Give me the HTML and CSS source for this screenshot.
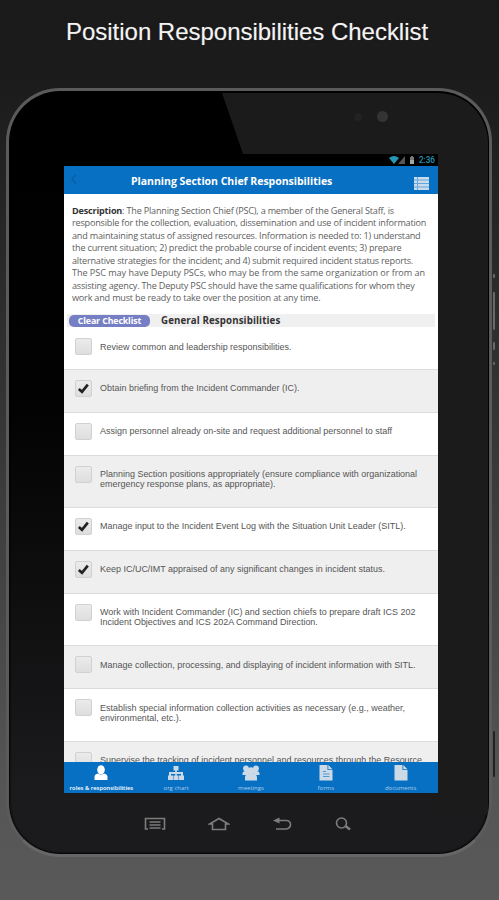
FILE: index.html
```html
<!DOCTYPE html>
<html lang="en">
<head>
<meta charset="utf-8">
<title>Position Responsibilities Checklist</title>
<link rel="stylesheet" href="styles.css">
</head>
<body>
<h1 class="title"><span>Position Responsibilities Checklist</span></h1>
<main class="device">
  <div class="glare"></div>
  <i class="sensor"></i><i class="camera"></i>
  <i class="side dot-a"></i><i class="side power"></i><i class="side dot-b"></i><i class="side dot-c"></i><i class="side dock"></i>
  <section class="screen">
    <div class="status">
      <svg width="29" height="10" viewBox="0 0 29 10"><path d="M0 3Q5 -1 10 3L5 9Z" fill="#2796b5"/><path d="M16 1V9H9Z" fill="#555"/><path d="M21 2h1V1h2v1h1v7h-4Z" fill="#777"/><path d="M21 5h4v4h-4z" fill="#9aa"/></svg>
      <span>2:36</span>
    </div>
    <header class="bar">
      <svg class="back" width="8" height="12" viewBox="0 0 8 12"><path d="M6 1.5 2 6l4 4.5" fill="none" stroke="#0a5fa8" stroke-width="1.5"/></svg>
      <h2>Planning Section Chief Responsibilities</h2>
      <svg class="menu" width="15" height="13" viewBox="0 0 15 13"><path d="M0 0h15v13H0z" fill="#68a5d8"/><path d="M0 0h3v2.5H0zM4 0h11v2.5H4zM0 3.5h3V6H0zM4 3.5h11V6H4zM0 7h3v2.5H0zM4 7h11v2.5H4zM0 10.5h3V13H0zM4 10.5h11V13H4z" fill="#c7dcec"/></svg>
    </header>
    <div class="content">
      <p class="desc"><b>Description</b>: The Planning Section Chief (PSC), a member of the General Staff, is<br>responsible for the collection, evaluation, dissemination and use of incident information<br>and maintaining status of assigned resources. Information is needed to: 1) understand<br>the current situation; 2) predict the probable course of incident events; 3) prepare<br>alternative strategies for the incident; and 4) submit required incident status reports.<br><span class="wide">The PSC may have Deputy PSCs, who may be from the same organization or from an</span><br>assisting agency. The Deputy PSC should have the same qualifications for whom they<br>work and must be ready to take over the position at any time.</p>
      <div class="section"><button>Clear Checklist</button><h3>General Responsibilities</h3></div>
      <ul class="list">
        <li class="first"><i class="box"></i><span>Review common and leadership responsibilities.</span></li>
        <li><i class="box"><svg viewBox="0 0 17 17"><path d="M3.8 8.9 7 11.8 12.8 4.7" /></svg></i><span>Obtain briefing from the Incident Commander (IC).</span></li>
        <li><i class="box"></i><span>Assign personnel already on-site and request additional personnel to staff</span></li>
        <li class="two"><i class="box"></i><span>Planning Section positions appropriately (ensure compliance with organizational<br>emergency response plans, as appropriate).</span></li>
        <li><i class="box"><svg viewBox="0 0 17 17"><path d="M3.8 8.9 7 11.8 12.8 4.7" /></svg></i><span>Manage input to the Incident Event Log with the Situation Unit Leader (SITL).</span></li>
        <li><i class="box"><svg viewBox="0 0 17 17"><path d="M3.8 8.9 7 11.8 12.8 4.7" /></svg></i><span>Keep IC/UC/IMT appraised of any significant changes in incident status.</span></li>
        <li class="two"><i class="box"></i><span>Work with Incident Commander (IC) and section chiefs to prepare draft ICS 202<br>Incident Objectives and ICS 202A Command Direction.</span></li>
        <li><i class="box"></i><span>Manage collection, processing, and displaying of incident information with SITL.</span></li>
        <li class="two"><i class="box"></i><span>Establish special information collection activities as necessary (e.g., weather,<br>environmental, etc.).</span></li>
        <li><i class="box"></i><span>Supervise the tracking of incident personnel and resources through the Resource</span></li>
      </ul>
    </div>
    <nav class="tabs">
      <a class="active"><svg viewBox="0 0 18 16"><ellipse cx="9" cy="4.7" rx="3.8" ry="4.5"/><path d="M2.500 15v-3q0-3 3.500-3.500Q9 10.500 12 8.500 15.500 9 15.500 12v3Z"/></svg><span>roles &amp; responsibilities</span></a>
      <a><svg viewBox="0 0 18 16"><path d="M6.500 1h5v4.500h-1.700V7H16v3.500h1V15h-5v-4.500h2V9H9.800v1.500h1.700V15h-5v-4.500h1.700V9H4v1.500h2V15H1v-4.500h1V7h6.200V5.500H6.500Z"/></svg><span>org chart</span></a>
      <a><svg viewBox="0 0 18 16"><circle cx="4" cy="3.500" r="2.900"/><circle cx="14" cy="3.500" r="2.900"/><path d="M.5 10V8Q1 6 3.500 6H6V10ZM12 10V6h2.500Q17 6 17.500 8v2Z"/><circle cx="9" cy="6" r="3.700"/><path d="M3 15.500v-3Q3 9.500 6 9h6Q15 9.500 15 12.500V15.500Z"/></svg><span>meetings</span></a>
      <a><svg viewBox="0 0 18 16"><path d="M2.500 0h8v5h5v10.500h-13ZM11.300 0l4.200 4.200h-4.200Z"/><path class="rule" d="M6 6.500h3M6 9h6.500M6 11.500h6.500"/></svg><span>forms</span></a>
      <a><svg viewBox="0 0 18 16"><path d="M2.500 0h8v5h5v10.500h-13ZM11.300 0l4.200 4.200h-4.200Z"/></svg><span>documents</span></a>
    </nav>
  </section>
  <div class="keys">
    <svg width="22" height="14" viewBox="0 0 22 14"><path d="M4 12H1.500V1.500h19V12H18M5.500 5h11M5.500 8h11M5.500 11h11"/></svg>
    <svg width="22" height="14" viewBox="0 0 22 14"><path d="M4.500 7H1.500L11 1.500 20.500 7h-3v5.500h-13Z"/></svg>
    <svg width="20" height="14" viewBox="0 0 20 14"><path d="M5 3.500h9.500q4 .5 4 4t-4 4.500H4"/><path class="solid" d="M1 3.500 7.500 .5v6Z"/></svg>
    <svg width="18" height="14" viewBox="0 0 18 14"><circle cx="7.500" cy="6" r="5"/><path class="handle" d="m11.500 9 4.500 3.500"/></svg>
  </div>
</main>
</body>
</html>
```
FILE: styles.css
```css
* { box-sizing: border-box; }
body {
  margin: 0;
  width: 499px;
  height: 900px;
  overflow: hidden;
  font-family: "Liberation Sans", sans-serif;
  background: linear-gradient(#1a1a1a 0, #1c1c1c 90px, #303030 350px, #414141 560px, #555 780px, #595959 900px);
}
.title {
  height: 88px;
  margin: 0;
  padding: 18px 0 0 66px;
  color: #f4f4f4;
  font-size: 24px;
  line-height: 28px;
  font-weight: 400;
  letter-spacing: -.02px;
  white-space: nowrap;
  text-shadow: 0 0 2px #000, 0 0 1px #ccc;
}
.device {
  position: relative;
  width: 486px;
  height: 769px;
  margin-left: 6px;
  padding: 63px 0 0 55px;
  border: 3px solid #5b5b5b;
  border-bottom-color: #666;
  border-radius: 54px;
  background: linear-gradient(#000, #020202 40%, #1b1b1d 92%);
  box-shadow: inset 0 0 2px 1px #000;
}
.glare {
  position: absolute;
  inset: 2px 1px 40px 1px;
  border-radius: 50px 50px 0 0;
  background: #1b1b1c;
  clip-path: polygon(212px 0, 100% 0, 100% 100%, 416px 100%, 416px 61px, 233px 61px);
}
.camera, .sensor {
  position: absolute;
  top: 20px;
  left: 368px;
  width: 11px;
  height: 11px;
  border-radius: 50%;
  background: #343435;
}
.sensor { top: 22px; left: 345px; width: 8px; height: 8px; background: #222; }
.side { position: absolute; left: 484px; width: 2px; background: #696969; border-radius: 1px; }
.dot-a { top: 183px; height: 4px; }
.power { top: 201px; height: 38px; }
.dot-b { top: 251px; height: 8px; }
.dot-c { top: 271px; height: 3px; }
.dock { top: 640px; height: 46px; background: #222; }
.screen { position: relative; width: 374px; height: 639px; overflow: hidden; background: #fff; }
.status {
  display: flex;
  justify-content: flex-end;
  align-items: center;
  height: 12px;
  padding-right: 3px;
  gap: 1px;
  background: #000;
  color: #2796b5;
  font: 500 8.200px/12px Roboto, sans-serif;
}
.bar {
  display: grid;
  grid-template-columns: 67px 1fr 15px;
  align-items: center;
  height: 28px;
  padding: 0 9px 0 0;
  background: #0870c2;
}
.back { margin: -2px 0 0 6px; }
.bar h2 {
  margin: 1px 0 0;
  color: #fff;
  font: 700 10.5px/14px "Open Sans", sans-serif;
  letter-spacing: -.02px;
  white-space: nowrap;
}
.menu { margin-top: 7px; }
.content { height: 568px; overflow: hidden; }
.desc {
  margin: 0;
  padding: 10.500px 0 0 8px;
  height: 120px;
  color: #606060;
  font: 9.100px/12.500px "Open Sans", sans-serif;
  letter-spacing: -.2px;
  white-space: nowrap;
}
.desc .wide { letter-spacing: -.05px; }
.desc b { color: #333; }
.section {
  display: flex;
  align-items: center;
  height: 13px;
  margin: 0 3px;
  background: #f0f0f0;
}
.section button {
  width: 81px;
  height: 12px;
  margin: 0 0 0 2px;
  padding: 0;
  border: 0;
  border-radius: 5px;
  color: #fff;
  background: #777fc4;
  font: 700 8.800px/12px "Open Sans", sans-serif;
  letter-spacing: -.12px;
}
.section h3 {
  margin: 0 0 0 11px;
  color: #333;
  font: 700 9.700px/13px "Open Sans", sans-serif;
  letter-spacing: .12px;
  white-space: nowrap;
}
.list { margin: 0; padding: 0; list-style: none; }
.list li {
  display: flex;
  height: 43px;
  padding: 10px 0 0 11px;
  gap: 8px;
  border-top: 1px solid #dcdcdc;
  color: #555;
  font-size: 8.970px;
  line-height: 10px;
  white-space: nowrap;
}
.list li span { padding-top: 3.500px; }
.list .first { height: 41.700px; border-top-color: transparent; }
.list .two { height: 52.300px; }
.list li:nth-child(even) { background: #efefef; }
.box {
  flex: none;
  width: 17px;
  height: 17px;
  border: 1px solid #d1d1d1;
  border-radius: 2px;
  background: linear-gradient(#ebebeb, #dedede);
}
.box svg { display: block; width: 17px; height: 17px; margin: -1px; fill: none; stroke: #222; stroke-width: 2.700; }
.tabs {
  display: grid;
  grid-template-columns: repeat(5, 1fr);
  height: 31px;
  background: #0870c2;
}
.tabs a {
  display: flex;
  flex-direction: column;
  align-items: center;
  padding-top: 3px;
  color: #a9cceb;
  font: 6px/8px "Open Sans", sans-serif;
  white-space: nowrap;
}
.tabs svg { width: 18px; height: 16px; margin-bottom: 3px; fill: #cbdae6; }
.tabs .active { color: #fff; font-weight: 600; font-size: 5.800px; }
.tabs .active svg { fill: #fff; }
.tabs .rule { fill: none; stroke: #5598d0; }
.keys {
  display: grid;
  grid-template-columns: 22px 22px 20px 18px;
  column-gap: 42px;
  margin: 24px 0 0 80px;
}
.keys svg { fill: none; stroke: #7d7d7d; stroke-width: 1.600; }
.keys .solid { fill: #7d7d7d; stroke: none; }
.keys .handle { stroke-width: 2.500; }
```
